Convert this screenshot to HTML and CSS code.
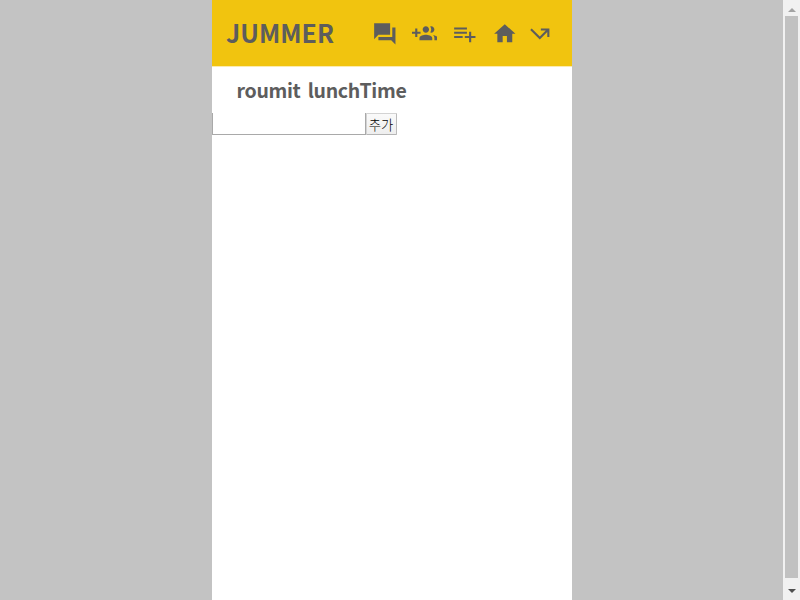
FILE: index.html
```html
<!DOCTYPE html>
<html lang="ko">
<head>
<meta charset="utf-8">
<title>JUMMER</title>
<link rel="stylesheet" href="styles.css">
</head>
<body>
<div class="page">
<main class="app">
<header class="header">
<h1 class="logo">JUMMER</h1>
<nav class="nav">
<svg class="icon" viewBox="0 0 24 24"><path d="M22 6h-3v9H6v3h12l4 4V6zm-5 7V2H2v15l4-4h11z"/></svg>
<svg class="icon" viewBox="0 0 24 24"><path d="M8 10H5V7H3v3H0v2h3v3h2v-3h3v-2zm10 1c1.66 0 2.99-1.34 2.99-3S19.66 5 18 5c-.32 0-.63.05-.91.14.57.81.9 1.79.9 2.86s-.34 2.04-.9 2.86c.28.09.59.14.91.14zm-5 0c1.66 0 2.99-1.34 2.99-3S14.66 5 13 5c-1.66 0-3 1.34-3 3s1.34 3 3 3zm6.62 2.16c.83.73 1.38 1.66 1.38 2.84v2h3v-2c0-1.54-2.37-2.49-4.38-2.84zM13 13c-2 0-6 1-6 3v2h12v-2c0-2-4-3-6-3z"/></svg>
<svg class="icon" viewBox="0 0 24 24"><path d="M14 10H2v2h12v-2zm0-4H2v2h12V6zm4 8v-4h-2v4h-4v2h4v4h2v-4h4v-2h-4zM2 16h8v-2H2v2z"/></svg>
<svg class="icon" viewBox="0 0 24 24"><path d="M10 20v-6h4v6h5v-8h3L12 3 2 12h3v8z"/></svg>
<svg class="icon icon-exit" viewBox="0 0 24 24"><path d="M3 8.41l9 9 7-7V15h2V7h-8v2h4.59L12 14.59 4.41 7 3 8.41z"/></svg>
</nav>
</header>
<h2 class="title">roumit lunchTime</h2>
<div class="form"><input class="field" type="text" aria-label="메뉴"><button class="add">추가</button></div>
</main>
</div>
<div class="scrollbar"><i class="arrow up"></i><i class="thumb"></i><i class="arrow down"></i></div>
</body>
</html>
```
FILE: styles.css
```css
* { box-sizing: border-box; }
body {
  margin: 0;
  height: 600px;
  display: flex;
  overflow: hidden;
  background: #c3c3c3;
  color: #5d5d5d;
  font-family: "Noto Sans CJK KR", "Noto Sans", sans-serif;
}
.page { flex: 1; display: flex; padding-left: 212px; }
.app { width: 360px; background: #fff; }
.header {
  height: 67px;
  padding: 0 20px 0 14px;
  display: flex;
  align-items: center;
  justify-content: space-between;
  background: #f1c40f;
  border-bottom: 1px solid #fbebaf;
}
.logo { margin: 0 0 2px; font-size: 25px; line-height: 34px; font-weight: 700; }
.nav { display: flex; gap: 14.4px; margin: 1.3px 0 0; }
.icon { width: 25.6px; height: 25.6px; fill: currentColor; }
.icon-exit { margin-left: -5px; margin-right: -.4px; }
.title { margin: 8px 0 0 24.5px; font-size: 19.5px; line-height: 30px; font-weight: 700; letter-spacing: -0.3px; word-spacing: 2px; }
.form { display: flex; margin-top: 8px; height: 23px; }
.field {
  width: 154px;
  height: 22px;
  padding: 0;
  border: solid #a9a9a9;
  border-width: 0 1px 1px;
  border-radius: 0;
  background: #fff;
  outline: 0;
}
.add {
  width: 31px;
  height: 22px;
  padding: 0 1px 0 0;
  border: 1px solid #d3d3d3;
  border-bottom-color: #b5b5b5;
  border-right-color: #bbb;
  border-radius: 1px;
  background: linear-gradient(#fafafa, #eee);
  color: #000;
  font: 300 13.33px/19px "Noto Sans CJK KR", sans-serif;
}
.scrollbar {
  width: 17px;
  padding: 8px 2px 7px;
  display: flex;
  flex-direction: column;
  align-items: center;
  background: #f1f1f1;
}
.thumb { width: 13px; flex: 1; margin: 4px 0 11px; background: #c1c1c1; }
.arrow { border: 4px solid transparent; }
.up { border-top: 0; border-bottom-color: #a3a3a3; }
.down { border-bottom: 0; border-top-color: #505050; }
```
